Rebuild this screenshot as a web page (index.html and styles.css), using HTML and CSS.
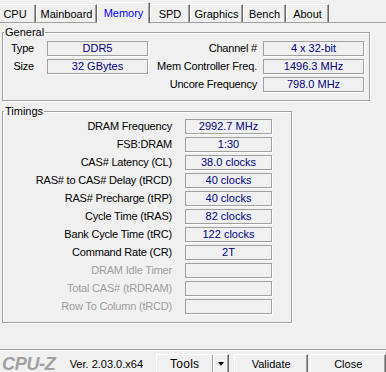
FILE: index.html
```html
<!DOCTYPE html>
<html lang="en">
<head>
    <meta charset="UTF-8">
    <meta name="viewport" content="width=device-width, initial-scale=1.0">
    <title>CPU-Z Memory</title>
    <link rel="stylesheet" href="styles.css">
</head>
<body>
    <div class="window">
        <div class="tabs">
            <div class="tab tab-cpu">CPU</div>
            <div class="tab tab-mainboard">Mainboard</div>
            <div class="tab tab-memory active">Memory</div>
            <div class="tab tab-spd">SPD</div>
            <div class="tab tab-graphics">Graphics</div>
            <div class="tab tab-bench">Bench</div>
            <div class="tab tab-about">About</div>
        </div>

        <div class="page">
            <fieldset class="group general">
                <legend>General</legend>
                <div class="general-grid">
                    <span class="label narrow">Type</span>
                    <span class="field">DDR5</span>
                    <span class="label">Channel #</span>
                    <span class="field">4 x 32-bit</span>

                    <span class="label narrow">Size</span>
                    <span class="field">32 GBytes</span>
                    <span class="label">Mem Controller Freq.</span>
                    <span class="field">1496.3 MHz</span>

                    <span></span>
                    <span></span>
                    <span class="label">Uncore Frequency</span>
                    <span class="field">798.0 MHz</span>
                </div>
            </fieldset>

            <fieldset class="group timings">
                <legend>Timings</legend>
                <div class="timings-grid">
                    <span class="label">DRAM Frequency</span>
                    <span class="field">2992.7 MHz</span>
                    <span class="label">FSB:DRAM</span>
                    <span class="field">1:30</span>
                    <span class="label">CAS# Latency (CL)</span>
                    <span class="field">38.0 clocks</span>
                    <span class="label">RAS# to CAS# Delay (tRCD)</span>
                    <span class="field">40 clocks</span>
                    <span class="label">RAS# Precharge (tRP)</span>
                    <span class="field">40 clocks</span>
                    <span class="label">Cycle Time (tRAS)</span>
                    <span class="field">82 clocks</span>
                    <span class="label">Bank Cycle Time (tRC)</span>
                    <span class="field">122 clocks</span>
                    <span class="label">Command Rate (CR)</span>
                    <span class="field">2T</span>
                    <span class="label disabled">DRAM Idle Timer</span>
                    <span class="field"></span>
                    <span class="label disabled">Total CAS# (tRDRAM)</span>
                    <span class="field"></span>
                    <span class="label disabled">Row To Column (tRCD)</span>
                    <span class="field"></span>
                </div>
            </fieldset>
        </div>

        <div class="footer">
            <span class="logo">CPU-Z</span>
            <span class="version">Ver. 2.03.0.x64</span>
            <div class="button split">
                <span class="split-main">Tools</span>
                <span class="split-arrow"><span class="arrow"></span></span>
            </div>
            <div class="button validate">Validate</div>
            <div class="button close">Close</div>
        </div>
    </div>
</body>
</html>
```

FILE: styles.css
```css
body {
    margin: 0;
    background-color: #f0f0f0;
    color: #000000;
    font-family: "Liberation Sans", Arial, sans-serif;
    font-size: 11px;
    overflow: hidden;
}

.window {
    width: 386px;
    height: 372px;
}

/* tab strip */

.tabs {
    display: flex;
    align-items: flex-end;
    height: 22px;
    margin-left: -6px;
    border-bottom: 1px solid #a0a0a0;
}

.tab {
    box-sizing: border-box;
    height: 18px;
    padding-top: 1px;
    line-height: 16px;
    text-align: center;
    border-top: 1px solid #ffffff;
    border-left: 1px solid #ffffff;
    border-right: 1px solid #696969;
    box-shadow: inset -1px 0 0 #a0a0a0;
    background-color: #f0f0f0;
}

.tab.active {
    height: 21px;
    margin-bottom: -1px;
    padding-top: 2px;
    color: #0000ff;
}

.tab-cpu { width: 42px; }
.tab-mainboard { width: 61px; }
.tab-memory { width: 53px; }
.tab-spd { width: 40px; }
.tab-graphics { width: 53px; }
.tab-bench { width: 43px; }
.tab-about { width: 43px; }

/* page body */

.page {
    box-sizing: border-box;
    height: 324px;
    border-bottom: 1px solid #a0a0a0;
}

.group {
    box-sizing: border-box;
    margin: 3px 0 0 2px;
    padding: 0;
    border: 1px solid #a0a0a0;
    box-shadow: inset 1px 1px 0 #ffffff, 1px 1px 0 #ffffff;
}

.group legend {
    margin-left: 1px;
    padding: 0 1px;
    line-height: 13px;
}

.general {
    width: 368px;
    padding-bottom: 8px;
}

.timings {
    width: 290px;
    margin-top: 4px;
    padding-bottom: 8px;
}

.general-grid {
    display: grid;
    grid-template-columns: 44px 101px 115px 101px;
    grid-auto-rows: 15px;
    row-gap: 3px;
    padding-top: 2px;
}

.timings-grid {
    display: grid;
    grid-template-columns: 182px 87px;
    grid-auto-rows: 15px;
    row-gap: 3px;
    padding-top: 1px;
}

.label {
    line-height: 15px;
    text-align: right;
    padding-right: 6px;
    white-space: nowrap;
    letter-spacing: -0.2px;
}

.label.narrow {
    padding-right: 13px;
}

.timings-grid .label {
    padding-right: 13px;
}

.label.disabled {
    color: #9d9d9d;
}

.field {
    box-sizing: border-box;
    height: 15px;
    line-height: 13px;
    text-align: center;
    color: #000080;
    border: 1px solid #a0a0a0;
    box-shadow: 1px 1px 0 #ffffff;
    white-space: nowrap;
}

/* footer */

.footer {
    display: flex;
    align-items: flex-start;
    padding-top: 3px;
    border-top: 1px solid #ffffff;
}

.logo {
    width: 68px;
    padding: 1px 0 0 2px;
    font-size: 18px;
    line-height: 19px;
    font-weight: bold;
    font-style: italic;
    color: #a0a0a0;
    letter-spacing: -0.3px;
}

.version {
    width: 87px;
    line-height: 20px;
}

.button {
    box-sizing: border-box;
    height: 21px;
    line-height: 18px;
    text-align: center;
    background-color: #f0f0f0;
    border: 1px solid;
    border-color: #ffffff #696969 #696969 #ffffff;
    box-shadow: inset -1px -1px 0 #a0a0a0;
}

.split {
    display: flex;
    width: 73px;
    margin-right: 5px;
}

.split-main {
    width: 55px;
    font-size: 12px;
    letter-spacing: 0.3px;
    border-right: 1px solid #a0a0a0;
}

.split-arrow {
    flex: 1;
    display: flex;
    justify-content: center;
    align-items: center;
    border-left: 1px solid #ffffff;
    padding-bottom: 2px;
}

.arrow {
    width: 0;
    height: 0;
    border-left: 3.5px solid transparent;
    border-right: 3.5px solid transparent;
    border-top: 4px solid #000000;
}

.validate {
    width: 75px;
    margin-right: 2px;
}

.close {
    width: 76px;
}
```
